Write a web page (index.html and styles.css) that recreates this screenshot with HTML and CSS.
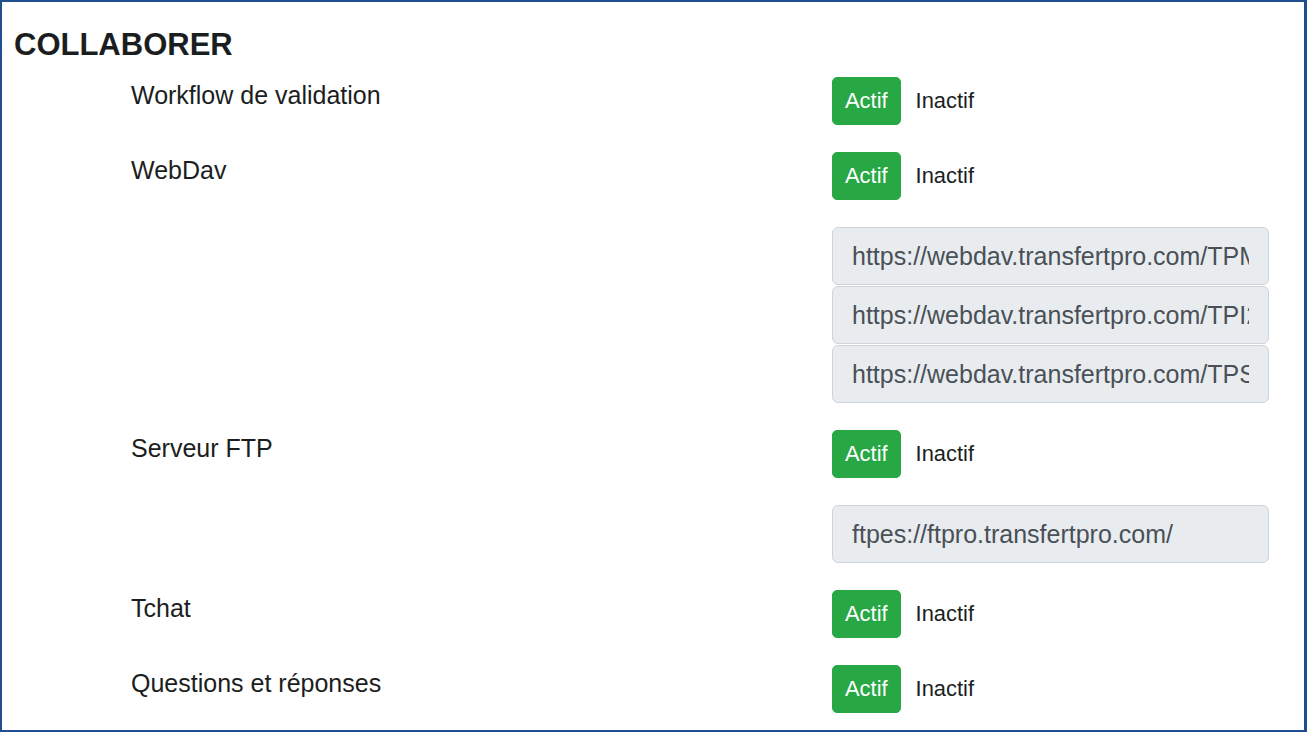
FILE: index.html
```html
<!DOCTYPE html>
<html lang="fr">
  <head>
    <meta charset="UTF-8" />
    <meta name="viewport" content="width=device-width, initial-scale=1.0" />
    <title>Collaborer</title>
    <link rel="stylesheet" href="styles.css">
  </head>
  <body>
    <div class="frame">
      <h2 class="section-title">COLLABORER</h2>

      <div class="form-row">
        <div class="row-label">Workflow de validation</div>
        <div class="toggle">
          <button type="button" class="btn-actif">Actif</button>
          <span class="inactif">Inactif</span>
        </div>
      </div>

      <div class="form-row">
        <div class="row-label">WebDav</div>
        <div class="toggle">
          <button type="button" class="btn-actif">Actif</button>
          <span class="inactif">Inactif</span>
        </div>
      </div>

      <div class="form-row fields">
        <div class="row-label"></div>
        <div class="field-list">
          <input class="url-field" type="text" readonly value="https://webdav.transfertpro.com/TPMESPACE/" />
          <input class="url-field" type="text" readonly value="https://webdav.transfertpro.com/TPI2DOCS/" />
          <input class="url-field" type="text" readonly value="https://webdav.transfertpro.com/TPSPARTAGE/" />
        </div>
      </div>

      <div class="form-row">
        <div class="row-label">Serveur FTP</div>
        <div class="toggle">
          <button type="button" class="btn-actif">Actif</button>
          <span class="inactif">Inactif</span>
        </div>
      </div>

      <div class="form-row fields">
        <div class="row-label"></div>
        <div class="field-list">
          <input class="url-field" type="text" readonly value="ftpes://ftpro.transfertpro.com/" />
        </div>
      </div>

      <div class="form-row">
        <div class="row-label">Tchat</div>
        <div class="toggle">
          <button type="button" class="btn-actif">Actif</button>
          <span class="inactif">Inactif</span>
        </div>
      </div>

      <div class="form-row">
        <div class="row-label">Questions et réponses</div>
        <div class="toggle">
          <button type="button" class="btn-actif">Actif</button>
          <span class="inactif">Inactif</span>
        </div>
      </div>
    </div>
  </body>
</html>
```

FILE: styles.css
```css
html,
body {
  margin: 0;
  height: 100%;
  overflow: hidden;
}
body {
  font-family: "Liberation Sans", Arial, sans-serif;
  color: #1b1e21;
  background-color: #fff;
}
.frame {
  box-sizing: border-box;
  height: 100%;
  border: 2px solid #1f4f8f;
  border-right-width: 3px;
  padding: 24px 12px 0 12px;
}
.section-title {
  margin: 0 0 12px 0;
  font-size: 31px;
  line-height: 37px;
  font-weight: bold;
}
.form-row {
  display: grid;
  grid-template-columns: 701px 437px;
  margin-left: 117px;
  margin-bottom: 25px;
}
.row-label {
  padding-top: 2px;
  font-size: 25px;
  line-height: 37.5px;
}
.toggle {
  display: flex;
  align-items: center;
  margin-top: 2px;
}
.btn-actif {
  box-sizing: border-box;
  height: 48px;
  padding: 0 12px;
  border: 1.5px solid #28a745;
  border-radius: 5px;
  background-color: #28a745;
  color: #fff;
  font-family: inherit;
  font-size: 21.9px;
  line-height: 1;
}
.inactif {
  margin-left: 15px;
  font-size: 21.9px;
}
.fields {
  padding-top: 2px;
}
.fields .row-label {
  padding-top: 0;
}
.field-list {
  display: flex;
  flex-direction: column;
  gap: 1px;
}
.url-field {
  box-sizing: border-box;
  width: 437px;
  height: 58px;
  margin: 0;
  padding: 0 19px;
  border: 1.5px solid #ced4da;
  border-radius: 6px;
  background-color: #e9ecef;
  color: #495057;
  font-family: inherit;
  font-size: 25px;
  outline: none;
}
```
